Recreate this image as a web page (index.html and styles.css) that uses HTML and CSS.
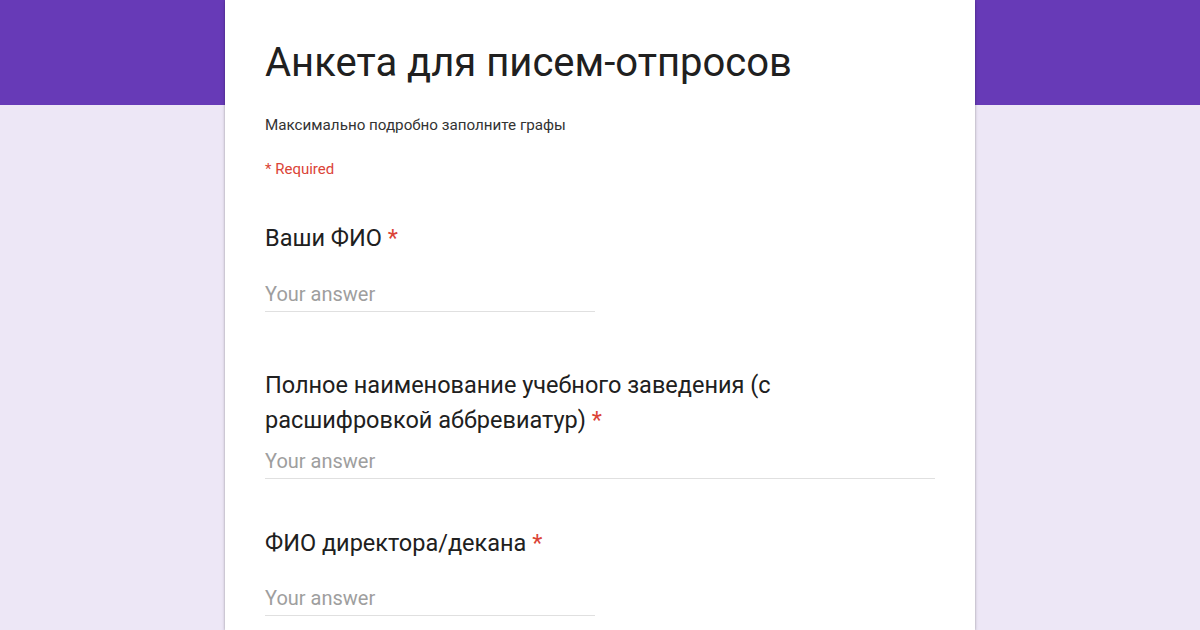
FILE: index.html
```html
<!DOCTYPE html>
<html lang="ru">
<head>
<meta charset="utf-8">
<title>Анкета для писем-отпросов</title>
<link rel="stylesheet" href="styles.css">
</head>
<body>
<div class="page">
  <div class="band"></div>
  <main class="card">
    <header class="form-header">
      <h1 class="title">Анкета для писем-отпросов</h1>
      <p class="desc">Максимально подробно заполните графы</p>
      <p class="required">* Required</p>
    </header>
    <section class="question q1">
      <div class="label">Ваши ФИО <span class="star">*</span></div>
      <div class="input short">Your answer</div>
    </section>
    <section class="question q2">
      <div class="label narrow">Полное наименование учебного заведения (с расшифровкой аббревиатур) <span class="star">*</span></div>
      <div class="input long">Your answer</div>
    </section>
    <section class="question q3">
      <div class="label">ФИО директора/декана <span class="star">*</span></div>
      <div class="input short">Your answer</div>
    </section>
  </main>
</div>
</body>
</html>
```

FILE: styles.css
```css
* { box-sizing: border-box; }
html, body {
  margin: 0;
  padding: 0;
  width: 1200px;
  height: 630px;
  overflow: hidden;
  background: #ede7f6;
  font-family: Roboto, "Noto Sans", Arial, sans-serif;
}
.page {
  position: relative;
  width: 1200px;
  height: 630px;
  display: flex;
  justify-content: center;
}
.band {
  position: absolute;
  left: 0;
  top: 0;
  width: 1200px;
  height: 105px;
  background: #673ab7;
}
.card {
  position: relative;
  width: 750px;
  height: 630px;
  background: #fff;
  box-shadow: 0 0 2px rgba(0,0,0,0.25), 0 2px 4px rgba(0,0,0,0.15);
  padding: 0 40px;
}
.form-header {
  padding-top: 39px;
}
.title {
  margin: 0;
  font-weight: 400;
  font-size: 40px;
  line-height: 48px;
  color: #202020;
}
.desc {
  margin: 0;
  margin-top: 28px;
  font-size: 15.2px;
  line-height: 20px;
  color: #333;
}
.required {
  margin: 0;
  margin-top: 24px;
  font-size: 15px;
  line-height: 20px;
  color: #db4437;
}
.question { margin-top: 42px; }
.q2 { margin-top: 56px; }
.q3 { margin-top: 47px; }
.label {
  font-size: 23.5px;
  line-height: 35px;
  color: #202020;
}
.label.narrow { max-width: 560px; }
.star { color: #db4437; }
.input {
  margin-top: 25px;
  font-size: 20px;
  line-height: 26px;
  color: #9e9e9e;
  border-bottom: 1px solid #e0e0e0;
  padding-bottom: 4px;
}
.q2 .input { margin-top: 10px; }
.q3 .input { margin-top: 24px; }
.input.short { width: 330px; }
.input.long { width: 670px; }
```
